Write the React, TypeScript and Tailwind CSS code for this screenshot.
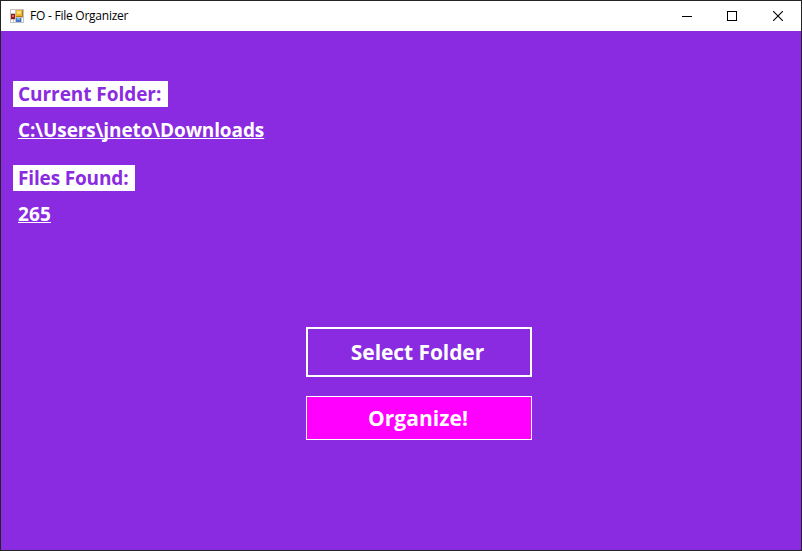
function AppIcon() {
  return (
    <svg width="14" height="14" viewBox="0 0 14 14" shapeRendering="crispEdges">
      <rect width="14" height="14" fill="#c3c3c3" />
      <rect x="1" y="1" width="4" height="3" fill="#fff" />
      <rect x="1" y="11" width="2" height="2" fill="#fff" />
      <rect x="4" y="11" width="1" height="2" fill="#fff" />
      <rect x="12" y="9" width="1" height="4" fill="#fff" />
      <rect x="6" y="1" width="7" height="7" fill="#b07c12" />
      <rect x="6" y="1" width="6" height="6" fill="#efb62c" />
      <rect x="7" y="2" width="4" height="3" fill="#fbdc7c" />
      <rect x="1" y="5" width="4" height="5" fill="#9d1712" />
      <rect x="2" y="6" width="2" height="2" fill="#e0705c" />
      <rect x="6" y="9" width="5" height="4" fill="#3d78d0" />
      <rect x="7" y="9" width="3" height="2" fill="#79aef0" />
    </svg>
  );
}

function TitleBar() {
  return (
    <header className="flex h-[30px] shrink-0 items-center bg-white pl-[9px] text-black">
      <AppIcon />
      <h1 className="ml-[6px] flex-1 text-[12px] leading-[16px] tracking-[-0.24px] whitespace-nowrap">FO - File Organizer</h1>
      <button aria-label="Minimize" className="flex h-[30px] w-[45px] items-center justify-center pl-px">
        <svg width="10" height="10" shapeRendering="crispEdges"><path d="M0 5.5H10" stroke="#000" /></svg>
      </button>
      <button aria-label="Maximize" className="flex h-[30px] w-[46px] items-center justify-center">
        <svg width="10" height="10" shapeRendering="crispEdges"><rect x=".5" y=".5" width="9" height="9" fill="none" stroke="#000" /></svg>
      </button>
      <button aria-label="Close" className="flex h-[30px] w-[46px] items-center justify-center">
        <svg width="10" height="10"><path d="M0 0L10 10M10 0L0 10" stroke="#000" strokeWidth="1.1" /></svg>
      </button>
    </header>
  );
}

export default function App() {
  return (
    <div className="flex h-[551px] w-[802px] flex-col border border-[#242424] bg-[#8a2be2] font-['Open_Sans','Noto_Sans',sans-serif]">
      <TitleBar />
      <main className="flex flex-1 flex-col items-start pt-[50px] pl-[12px] text-[19px] leading-[26px] font-bold text-white">
        <div className="h-[26px] w-[155px] bg-white pl-[5px] tracking-[-0.05px] whitespace-nowrap text-[#8a2be2]">Current Folder:</div>
        <div className="mt-[10px] h-[26px] pl-[5px] tracking-[-0.11px] whitespace-nowrap underline decoration-1 underline-offset-1 [text-decoration-skip-ink:none]">C:\Users\jneto\Downloads</div>
        <div className="mt-[22px] h-[26px] w-[122px] bg-white pl-[5px] tracking-[-0.15px] whitespace-nowrap text-[#8a2be2]">Files Found:</div>
        <div className="mt-[10px] h-[26px] pl-[5px] tracking-[0.15px] underline decoration-1 underline-offset-1">265</div>
        <div className="mt-[100px] ml-[293px] flex w-[226px] flex-col gap-[19px] text-[21px]">
          <button className="h-[50px] border-2 border-white pr-[3px] tracking-[-0.08px] whitespace-nowrap">Select Folder</button>
          <button className="h-[44px] border border-white bg-[#ff00ff] pr-[2px] tracking-[0.05px] whitespace-nowrap">Organize!</button>
        </div>
      </main>
    </div>
  );
}
